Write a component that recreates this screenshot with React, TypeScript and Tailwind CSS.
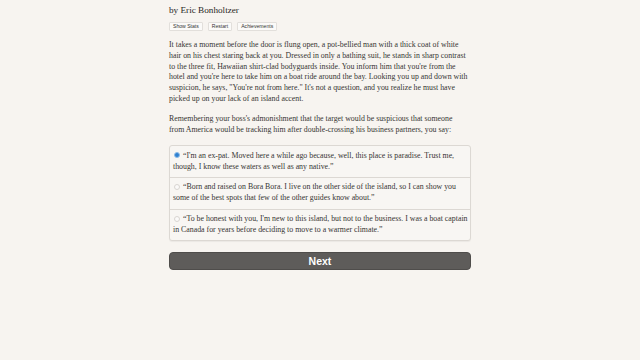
const para1 = [
  "It takes a moment before the door is flung open, a pot-bellied man with a thick coat of white",
  "hair on his chest staring back at you. Dressed in only a bathing suit, he stands in sharp contrast",
  "to the three fit, Hawaiian shirt-clad bodyguards inside. You inform him that you're from the",
  "hotel and you're here to take him on a boat ride around the bay. Looking you up and down with",
  "suspicion, he says, \"You're not from here.\" It's not a question, and you realize he must have",
  "picked up on your lack of an island accent.",
];

const para2 = [
  "Remembering your boss's admonishment that the target would be suspicious that someone",
  "from America would be tracking him after double-crossing his business partners, you say:",
];

const choices = [
  {
    lines: [
      "\u201cI'm an ex-pat. Moved here a while ago because, well, this place is paradise. Trust me,",
      "though, I know these waters as well as any native.\u201d",
    ],
    selected: true,
  },
  {
    lines: [
      "\u201cBorn and raised on Bora Bora. I live on the other side of the island, so I can show you",
      "some of the best spots that few of the other guides know about.\u201d",
    ],
    selected: false,
  },
  {
    lines: [
      "\u201cTo be honest with you, I'm new to this island, but not to the business. I was a boat captain",
      "in Canada for years before deciding to move to a warmer climate.\u201d",
    ],
    selected: false,
  },
];

function Lines({ lines }: { lines: string[] }) {
  return (
    <>
      {lines.map((l, i) => (
        <span key={i}>
          {l}
          {i < lines.length - 1 && <br />}
        </span>
      ))}
    </>
  );
}

export default function App() {
  return (
    <div className="min-h-screen w-full bg-[#f7f4f0] text-[#363432] font-['Liberation_Serif',serif]">
      <div className="mx-auto w-[302px] pt-[4px]">
        <h1 className="text-[9.2px] leading-[12px] text-[#2a2826]">by Eric Bonholtzer</h1>

        <div className="mt-[6px] flex gap-[5px] font-['Liberation_Sans',sans-serif] text-[5.1px] leading-none">
          {["Show Stats", "Restart", "Achievements"].map((b) => (
            <button
              key={b}
              className="h-[9px] px-[3px] bg-[#fbfaf8] border border-[#e2dfdb] rounded-[1px] text-[#333]"
            >
              {b}
            </button>
          ))}
        </div>

        <p className="mt-[9px] text-[7.85px] leading-[10.8px] whitespace-nowrap">
          <Lines lines={para1} />
        </p>

        <p className="mt-[9px] text-[7.85px] leading-[10.8px] whitespace-nowrap">
          <Lines lines={para2} />
        </p>

        <div className="mt-[10px] border border-[#dcd8d3] rounded-[3px] bg-[#f8f6f3] shadow-[0_1px_1px_rgba(0,0,0,0.05)]">
          {choices.map((c, i) => (
            <label
              key={i}
              className={`block px-[3px] py-[4.5px] text-[7.85px] leading-[10.8px] whitespace-nowrap ${i > 0 ? "border-t border-[#dcd8d3]" : ""}`}
            >
              <span
                className={`inline-block align-[-0.5px] mr-[3px] ml-[1px] w-[6px] h-[6px] rounded-full ${
                  c.selected
                    ? "bg-[#2f80d0] border-[1.5px] border-[#8fbde8]"
                    : "bg-[#fbfaf9] border border-[#d8d5d1]"
                }`}
              />
              <Lines lines={c.lines} />
            </label>
          ))}
        </div>

        <button className="mt-[11px] w-full h-[18px] rounded-[4px] bg-[#5e5c5a] border border-[#4f4d4b] text-white font-['Liberation_Sans',sans-serif] font-bold text-[10.5px] leading-none">
          Next
        </button>
      </div>
    </div>
  );
}
